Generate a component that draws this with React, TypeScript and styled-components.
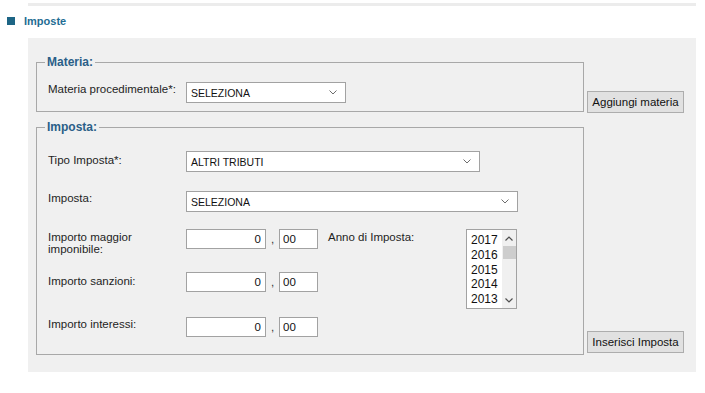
import React from "react";
import styled, { createGlobalStyle } from "styled-components";

const Global = createGlobalStyle`
  html, body { margin: 0; padding: 0; background: #ffffff; }
  body { font-family: "Liberation Sans", Arial, sans-serif; color: #1e1e1e; }
  * { box-sizing: border-box; }
`;

const Page = styled.div`
  width: 705px;
  height: 393px;
  overflow: hidden;
`;

const TopRule = styled.div`
  margin: 3px 0 0 28px;
  width: 668px;
  height: 3px;
  background: #ececec;
`;

const Header = styled.div`
  display: flex;
  align-items: center;
  gap: 9px;
  height: 29px;
  margin-bottom: 3px;
  padding-left: 7px;
`;

const Square = styled.span`
  width: 8px;
  height: 8px;
  background: #1d6585;
  margin-top: 1px;
`;

const Title = styled.span`
  font-size: 11px;
  font-weight: bold;
  color: #1f6d93;
  margin-top: 1px;
`;

const Panel = styled.div`
  margin-left: 28px;
  width: 668px;
  height: 334px;
  background: #f0f0f0;
  padding: 16px 0 0 8px;
  display: flex;
  flex-direction: column;
  gap: 7px;
`;

const Section = styled.div`
  display: flex;
  align-items: flex-end;
`;

const Fieldset = styled.fieldset<{ $pt: number; $pb: number }>`
  width: 548px;
  margin: 0;
  min-width: 0;
  border: 1px solid #a8a8a8;
  padding: ${(p) => p.$pt}px 0 ${(p) => p.$pb}px 11px;
  display: flex;
  flex-direction: column;
`;

const Legend = styled.legend`
  margin-left: -3px;
  padding: 0 2px;
  font-size: 12px;
  line-height: 17px;
  font-weight: bold;
  color: #2a5f88;
`;

const Row = styled.div<{ $mt?: number }>`
  display: flex;
  align-items: flex-start;
  margin-top: ${(p) => p.$mt ?? 0}px;
`;

const AmountRow = styled(Row)`
  height: 20px;
`;

const Label = styled.div<{ $pt?: number; $w?: number }>`
  width: ${(p) => p.$w ?? 138}px;
  flex: none;
  font-size: 11.5px;
  line-height: 14px;
  padding-top: ${(p) => p.$pt ?? 0}px;
  color: #1e1e1e;
`;

const TwoLineLabel = styled(Label)`
  line-height: 12px;
`;

const SelectBox = styled.div<{ $w: number }>`
  width: ${(p) => p.$w}px;
  height: 21px;
  border: 1px solid #a2a2a2;
  background: #ffffff;
  display: flex;
  align-items: center;
  justify-content: space-between;
  padding: 0 8px 0 4px;
  font-size: 10.5px;
  color: #111;
`;

const Chevron = styled.svg`
  width: 8px;
  height: 5px;
  flex: none;
`;

const AmountBlock = styled.div`
  display: flex;
  align-items: flex-start;
  margin-top: 17px;
`;

const AmountCol = styled.div`
  display: flex;
  flex-direction: column;
`;

const NumInput = styled.input<{ $w: number; $align: "left" | "right" }>`
  width: ${(p) => p.$w}px;
  height: 20px;
  border: 1px solid #a2a2a2;
  background: #ffffff;
  font-family: "Liberation Sans", Arial, sans-serif;
  font-size: 11.5px;
  color: #111;
  text-align: ${(p) => p.$align};
  padding: 0 4px 0 3px;
  margin: 0;
  outline: none;
`;

const Sep = styled.span`
  width: 13px;
  text-align: center;
  font-size: 11.5px;
  line-height: 20px;
  color: #333;
`;

const AnnoLabel = styled(Label)`
  margin-left: 10px;
`;

const ListBox = styled.div`
  width: 51px;
  height: 80px;
  border: 1px solid #a2a2a2;
  background: #ffffff;
  display: flex;
`;

const ListItems = styled.div`
  flex: 1;
  padding: 3px 0 0 4px;
  font-size: 12px;
  line-height: 14.8px;
  color: #111;
  overflow: hidden;
`;

const ScrollBar = styled.div`
  width: 14px;
  background: #f0f0f0;
  display: flex;
  flex-direction: column;
  align-items: center;
`;

const ScrollArrow = styled.div`
  height: 16px;
  width: 100%;
  display: flex;
  align-items: center;
  justify-content: center;
`;

const Thumb = styled.div`
  width: 13px;
  height: 13px;
  background: #cdcdcd;
`;

const Track = styled.div`
  flex: 1;
`;

const Button = styled.button<{ $mb: number }>`
  width: 97px;
  height: 22px;
  margin: 0 0 ${(p) => p.$mb}px 3px;
  background: #e1e1e1;
  border: 1px solid #adadad;
  border-radius: 0;
  font-family: "Liberation Sans", Arial, sans-serif;
  font-size: 11.5px;
  color: #111;
  padding: 0;
`;

const Down = () => (
  <Chevron viewBox="0 0 8 5">
    <polyline points="0.5,0.5 4,4 7.5,0.5" fill="none" stroke="#6d6d6d" strokeWidth="1" />
  </Chevron>
);

const Up = () => (
  <Chevron viewBox="0 0 8 5">
    <polyline points="0.5,4.5 4,1 7.5,4.5" fill="none" stroke="#505050" strokeWidth="1.2" />
  </Chevron>
);

const DownDark = () => (
  <Chevron viewBox="0 0 8 5">
    <polyline points="0.5,0.5 4,4 7.5,0.5" fill="none" stroke="#505050" strokeWidth="1.2" />
  </Chevron>
);

const Select = ({ w, value }: { w: number; value: string }) => (
  <SelectBox $w={w}>
    <span>{value}</span>
    <Down />
  </SelectBox>
);

const Amount = () => (
  <>
    <NumInput $w={80} $align="right" defaultValue="0" readOnly />
    <Sep>,</Sep>
    <NumInput $w={39} $align="left" defaultValue="00" readOnly />
  </>
);

const years = ["2017", "2016", "2015", "2014", "2013"];

export default function App() {
  return (
    <Page>
      <Global />
      <TopRule />
      <Header>
        <Square />
        <Title>Imposte</Title>
      </Header>
      <Panel>
        <Section>
          <Fieldset $pt={11} $pb={8}>
            <Legend>Materia:</Legend>
            <Row>
              <Label>Materia procedimentale*:</Label>
              <Select w={160} value="SELEZIONA" />
            </Row>
          </Fieldset>
          <Button $mb={-1}>Aggiungi materia</Button>
        </Section>
        <Section>
          <Fieldset $pt={15} $pb={17}>
            <Legend>Imposta:</Legend>
            <Row>
              <Label $pt={2}>Tipo Imposta*:</Label>
              <Select w={294} value="ALTRI TRIBUTI" />
            </Row>
            <Row $mt={19}>
              <Label>Imposta:</Label>
              <Select w={332} value="SELEZIONA" />
            </Row>
            <AmountBlock>
              <AmountCol>
                <AmountRow>
                  <TwoLineLabel $pt={2}>
                    Importo maggior
                    <br />
                    imponibile:
                  </TwoLineLabel>
                  <Amount />
                </AmountRow>
                <AmountRow $mt={23}>
                  <Label $pt={2}>Importo sanzioni:</Label>
                  <Amount />
                </AmountRow>
                <AmountRow $mt={25}>
                  <Label>Importo interessi:</Label>
                  <Amount />
                </AmountRow>
              </AmountCol>
              <AnnoLabel $pt={1}>Anno di Imposta:</AnnoLabel>
              <ListBox>
                <ListItems>
                  {years.map((y) => (
                    <div key={y}>{y}</div>
                  ))}
                </ListItems>
                <ScrollBar>
                  <ScrollArrow>
                    <Up />
                  </ScrollArrow>
                  <Thumb />
                  <Track />
                  <ScrollArrow>
                    <DownDark />
                  </ScrollArrow>
                </ScrollBar>
              </ListBox>
            </AmountBlock>
          </Fieldset>
          <Button $mb={2}>Inserisci Imposta</Button>
        </Section>
      </Panel>
    </Page>
  );
}
